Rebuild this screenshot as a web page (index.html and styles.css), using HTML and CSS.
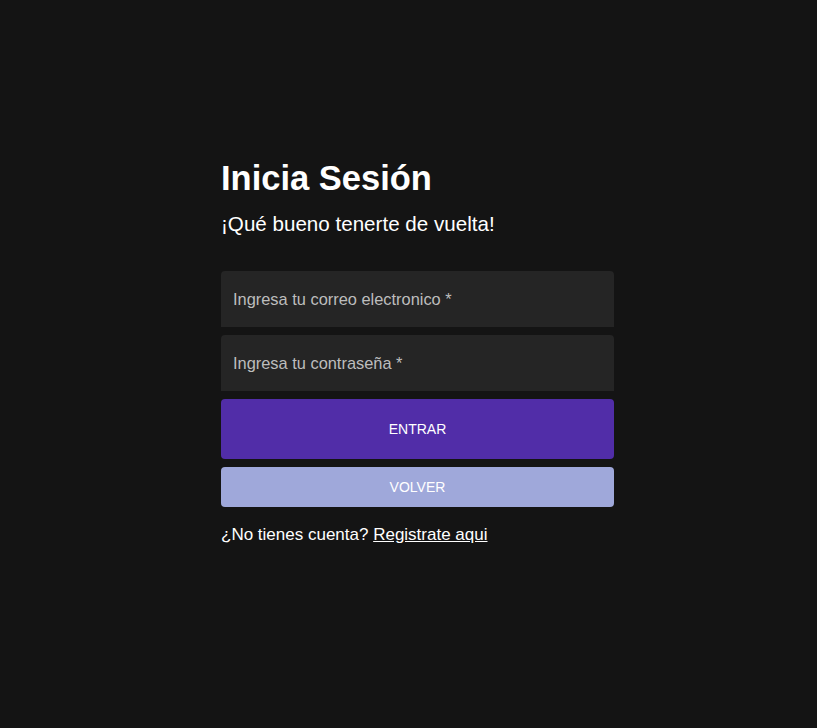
FILE: index.html
```html
<!DOCTYPE html>
<html lang="es">
<head>
<meta charset="utf-8">
<title>Inicia Sesión</title>
<link rel="stylesheet" href="styles.css">
</head>
<body>
<main class="page">
  <section class="login">
    <h1 class="title">Inicia Sesión</h1>
    <p class="subtitle">¡Qué bueno tenerte de vuelta!</p>
    <form class="form">
      <div class="field"><input class="input" type="email" placeholder="Ingresa tu correo electronico *"></div>
      <div class="field"><input class="input" type="password" placeholder="Ingresa tu contraseña *"></div>
      <button class="btn btn-primary" type="button">Entrar</button>
      <button class="btn btn-secondary" type="button">Volver</button>
    </form>
    <p class="signup">¿No tienes cuenta? <a class="signup-link" href="#">Registrate aqui</a></p>
  </section>
</main>
</body>
</html>
```
FILE: styles.css
```css
* { box-sizing: border-box; }
html, body { margin: 0; height: 100%; }
body {
  background: #141414;
  color: #fff;
  font-family: "Liberation Sans", Arial, sans-serif;
}
.page {
  display: flex;
  justify-content: center;
  padding-top: 157px;
}
.login {
  width: 411px;
  padding-left: 18px;
  display: flex;
  flex-direction: column;
}
.title {
  margin: 0;
  font-size: 34.5px;
  line-height: 43px;
  font-weight: 700;
}
.subtitle {
  margin: 12px 0 0;
  font-size: 20.6px;
  line-height: 24px;
}
.form {
  margin-top: 35px;
  display: flex;
  flex-direction: column;
  gap: 8px;
}
.field {
  background: #252525;
  border-radius: 4px 4px 0 0;
  height: 56px;
  display: flex;
}
.input {
  flex: 1;
  background: transparent;
  border: 0;
  outline: none;
  padding: 0 12px;
  color: #fff;
  font: 16.4px "Liberation Sans", Arial, sans-serif;
}
.input::placeholder { color: #bdbdbd; opacity: 1; }
.btn {
  border: 0;
  border-radius: 4px;
  color: #fff;
  font: 14px "Liberation Sans", Arial, sans-serif;
  text-transform: uppercase;
  cursor: pointer;
}
.btn-primary { background: #512da8; height: 60px; }
.btn-secondary { background: #9fa8da; height: 40px; }
.signup {
  margin: 18px 0 0;
  font-size: 17px;
  line-height: 20px;
}
.signup-link { color: #fff; text-decoration: underline; }
```
